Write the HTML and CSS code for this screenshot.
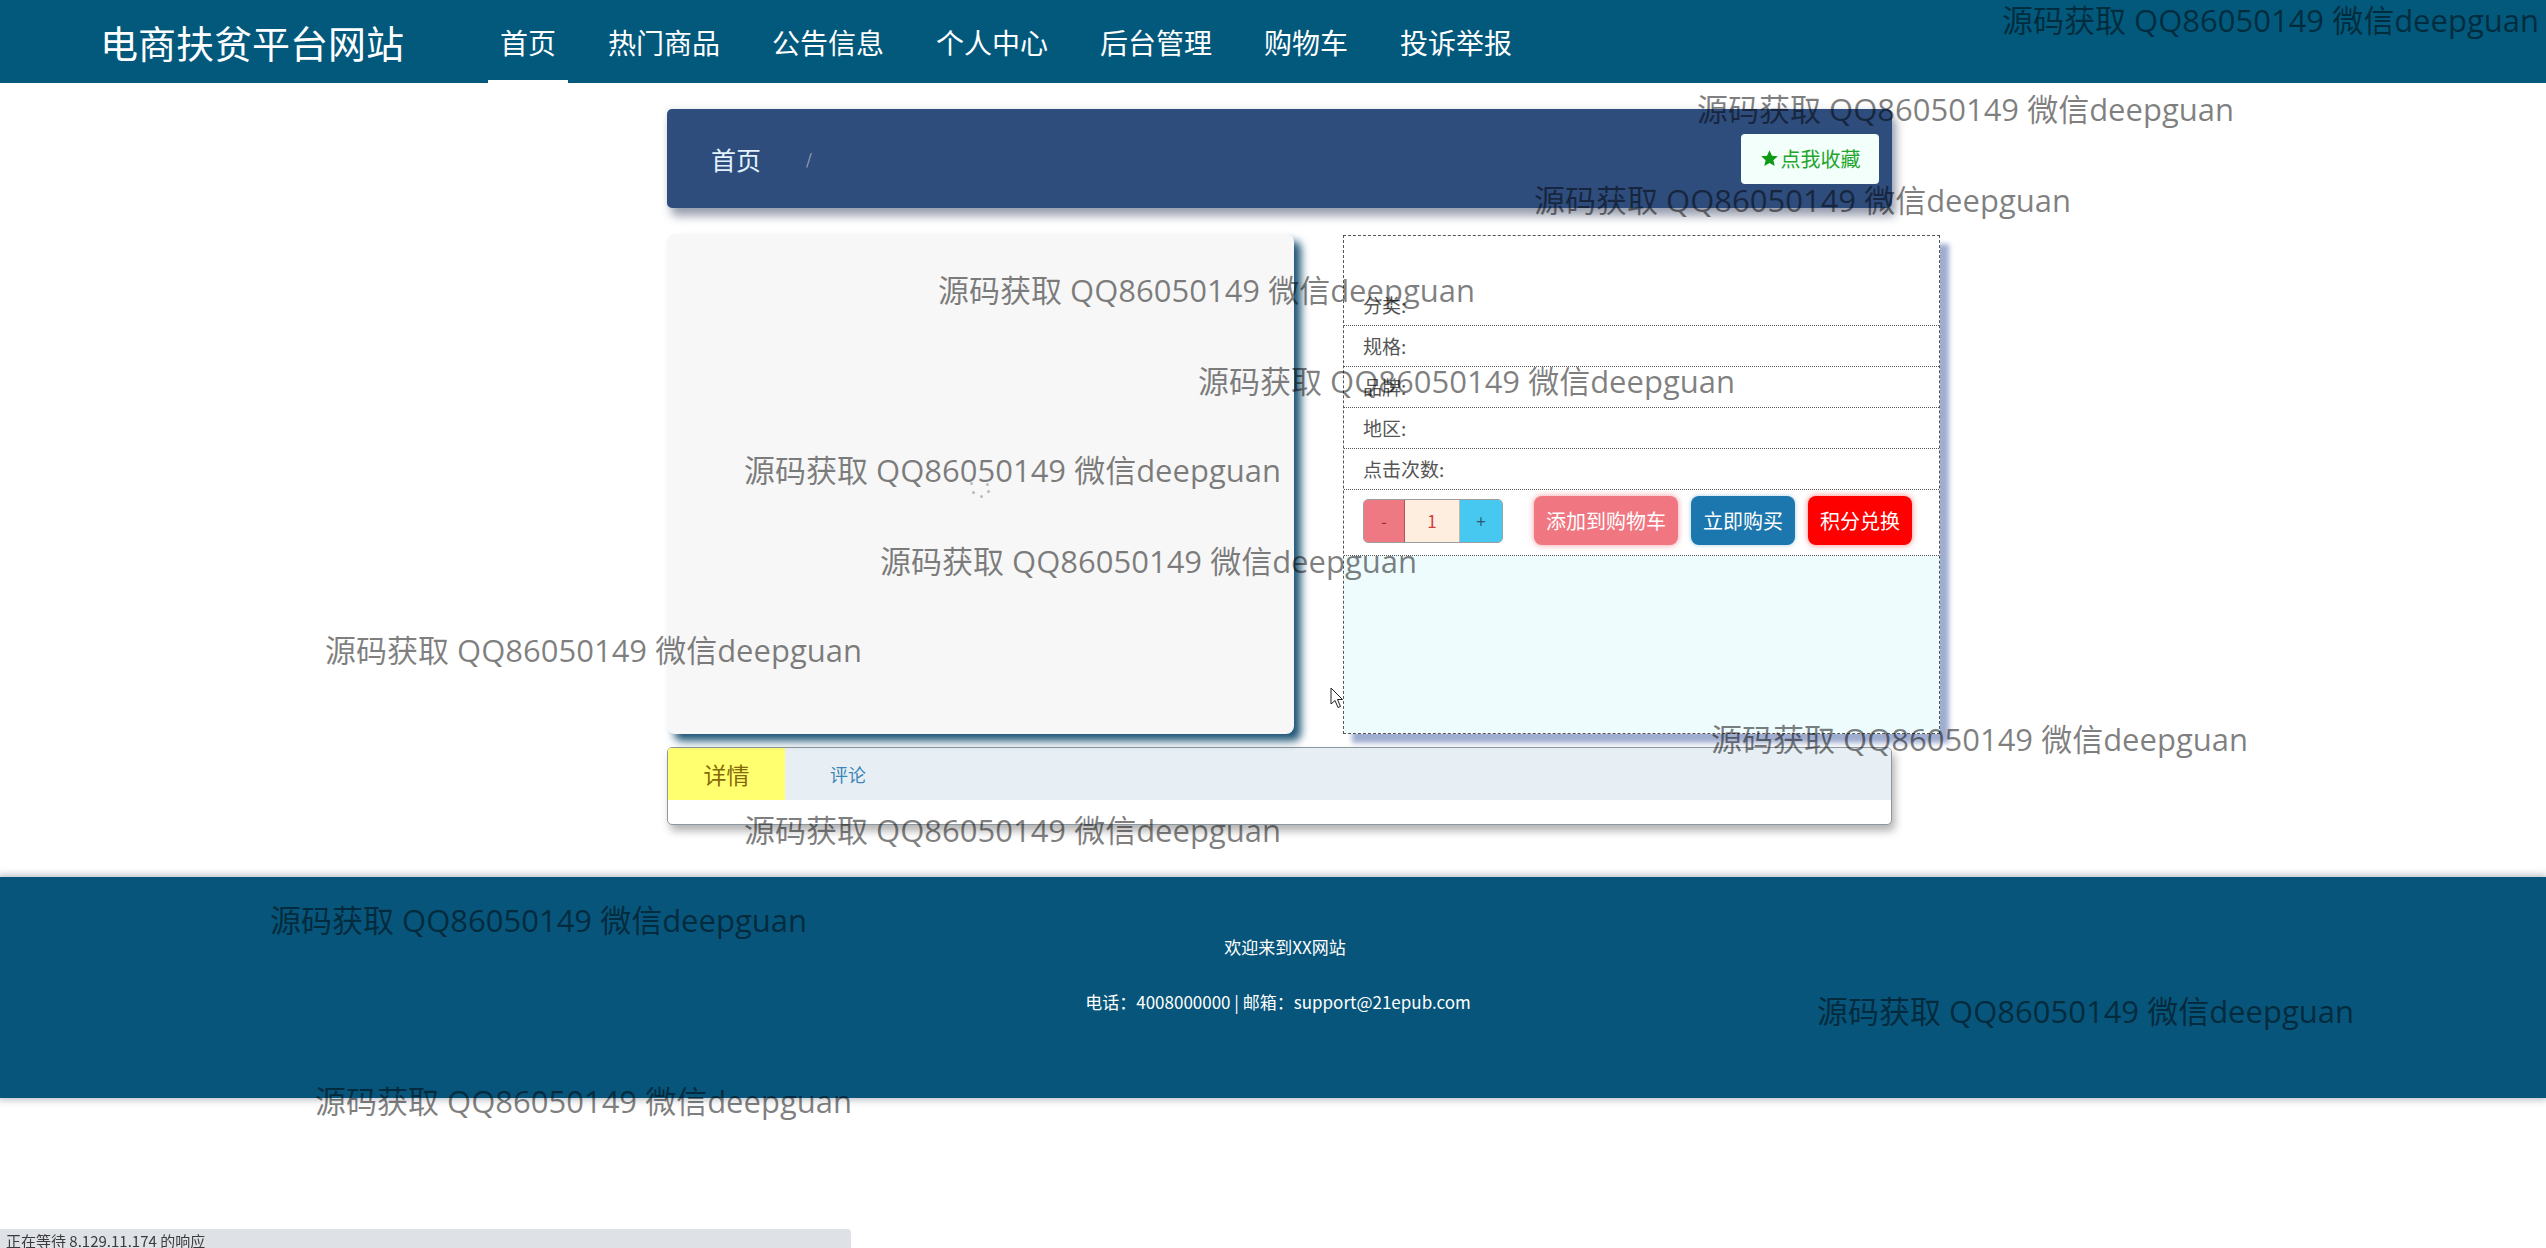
FILE: index.html
```html
<!DOCTYPE html>
<html lang="zh-CN">
<head>
<meta charset="utf-8">
<title>电商扶贫平台网站</title>
<link rel="stylesheet" href="styles.css">
</head>
<body>
<header class="topbar">
  <div class="logo">电商扶贫平台网站</div>
  <nav class="nav">
    <a class="nav-item active">首页</a>
    <a class="nav-item">热门商品</a>
    <a class="nav-item">公告信息</a>
    <a class="nav-item">个人中心</a>
    <a class="nav-item">后台管理</a>
    <a class="nav-item">购物车</a>
    <a class="nav-item">投诉举报</a>
  </nav>
</header>

<main class="main">
  <div class="crumb-bar">
    <div class="crumb">
      <span class="crumb-home">首页</span>
      <span class="crumb-sep">/</span>
    </div>
    <button class="fav-btn">
      <svg class="star" viewBox="0 0 24 24" width="19" height="19"><path d="M12 1.5l3.1 6.9 7.4.7-5.6 5 1.7 7.4L12 17.6l-6.6 3.9 1.7-7.4-5.6-5 7.4-.7z" fill="#0c9a17"/></svg>点我收藏
    </button>
  </div>

  <div class="product">
    <div class="gallery">
      <div class="spinner">
        <span class="dot d1"></span><span class="dot d2"></span><span class="dot d3"></span><span class="dot d4"></span><span class="dot d5"></span>
      </div>
    </div>
    <div class="info">
      <div class="info-title"></div>
      <div class="info-row">分类:</div>
      <div class="info-row">规格:</div>
      <div class="info-row">品牌:</div>
      <div class="info-row">地区:</div>
      <div class="info-row">点击次数:</div>
      <div class="info-actions">
        <div class="counter">
          <span class="cnt-minus">-</span>
          <span class="cnt-val">1</span>
          <span class="cnt-plus">+</span>
        </div>
        <div class="btns">
          <button class="btn btn-cart">添加到购物车</button>
          <button class="btn btn-buy">立即购买</button>
          <button class="btn btn-score">积分兑换</button>
        </div>
      </div>
      <div class="info-desc"></div>
    </div>
  </div>

  <div class="tabs">
    <div class="tab-head">
      <div class="tab tab-active">详情</div>
      <div class="tab tab-plain">评论</div>
    </div>
    <div class="tab-body"></div>
  </div>
</main>

<footer class="footer">
  <p class="footer-line1">欢迎来到XX网站</p>
  <p class="footer-line2">电话：4008000000 | 邮箱：support@21epub.com</p>
</footer>

<div class="watermarks">
  <span class="wm wm1">源码获取 QQ86050149 微信deepguan</span>
  <span class="wm wm2">源码获取 QQ86050149 微信deepguan</span>
  <span class="wm wm3">源码获取 QQ86050149 微信deepguan</span>
  <span class="wm wm4">源码获取 QQ86050149 微信deepguan</span>
  <span class="wm wm5">源码获取 QQ86050149 微信deepguan</span>
  <span class="wm wm6">源码获取 QQ86050149 微信deepguan</span>
  <span class="wm wm7">源码获取 QQ86050149 微信deepguan</span>
  <span class="wm wm8">源码获取 QQ86050149 微信deepguan</span>
  <span class="wm wm9">源码获取 QQ86050149 微信deepguan</span>
  <span class="wm wm10">源码获取 QQ86050149 微信deepguan</span>
  <span class="wm wm11">源码获取 QQ86050149 微信deepguan</span>
  <span class="wm wm12">源码获取 QQ86050149 微信deepguan</span>
  <span class="wm wm13">源码获取 QQ86050149 微信deepguan</span>
</div>

<svg class="cursor" viewBox="0 0 14 22" width="14" height="22"><path d="M1 1 L1 17 L5 13.5 L8 20.5 L10.5 19.5 L7.5 12.5 L12.5 12.5 Z" fill="#fff" stroke="#222" stroke-width="1"/></svg>

<div class="status">正在等待 8.129.11.174 的响应</div>
</body>
</html>
```

FILE: styles.css
```css
* { box-sizing: border-box; }

html, body {
  margin: 0;
  padding: 0;
}

body {
  background: #ffffff;
  font-family: "Noto Sans CJK SC", "Microsoft YaHei", sans-serif;
  color: #333;
  position: relative;
  min-height: 1248px;
  overflow: hidden;
}

/* ---------- header ---------- */
.topbar {
  height: 83px;
  background: #02597c;
  display: flex;
  align-items: stretch;
  padding-left: 100px;
}

.logo {
  color: #ffffff;
  font-size: 38px;
  display: flex;
  align-items: center;
  white-space: nowrap;
}

.nav {
  display: flex;
  align-items: stretch;
  gap: 28px;
  margin-left: 84px;
}

.nav-item {
  display: flex;
  align-items: center;
  padding: 0 12px;
  font-size: 28px;
  color: #ffffff;
  text-decoration: none;
  white-space: nowrap;
}

.nav-item.active {
  box-shadow: inset 0 -3px 0 #ffffff;
}

/* ---------- main ---------- */
.main {
  width: 1225px;
  margin: 26px 0 0 667px;
}

.crumb-bar {
  height: 99px;
  background: #2e4d7c;
  border-radius: 5px;
  display: flex;
  align-items: center;
  justify-content: space-between;
  padding: 0 13px 0 44px;
  box-shadow: 4px 8px 10px rgba(30, 45, 80, 0.45), 0 -2px 6px rgba(30, 45, 80, 0.08);
}

.crumb {
  display: flex;
  align-items: center;
}

.crumb-home {
  font-size: 25px;
  color: #e2f2ff;
}

.crumb-sep {
  margin-left: 45px;
  font-size: 15px;
  color: #a3acbb;
}

.fav-btn {
  height: 50px;
  width: 138px;
  border: none;
  border-radius: 4px;
  background: #f3fffa;
  color: #22a52c;
  font-family: inherit;
  font-size: 20px;
  display: flex;
  align-items: center;
  justify-content: center;
  gap: 2px;
  padding: 0;
}

.star {
  display: block;
}

/* ---------- product ---------- */
.product {
  display: flex;
  align-items: flex-start;
  gap: 49px;
  margin-top: 26px;
}

.gallery {
  flex: none;
  width: 627px;
  height: 500px;
  background: #f7f7f7;
  border-radius: 8px;
  box-shadow: 7px 7px 9px #1e5576;
  position: relative;
}

.spinner {
  position: absolute;
  left: 300px;
  top: 248px;
  width: 30px;
  height: 20px;
}

.dot {
  position: absolute;
  width: 3px;
  height: 3px;
  border-radius: 50%;
  background: #b9b9b9;
}
.d1 { left: 3px; top: 0; }
.d2 { left: 19px; top: 1px; }
.d3 { left: 5px; top: 9px; }
.d4 { left: 13px; top: 13px; }
.d5 { left: 20px; top: 8px; }

.info {
  flex: none;
  width: 597px;
  height: 499px;
  margin-top: 1px;
  border: 1px dashed #555;
  background: #ffffff;
  display: flex;
  flex-direction: column;
  box-shadow: 9px 9px 5px #9fadd0;
}

.info-title {
  height: 49px;
}

.info-row {
  height: 41px;
  line-height: 40px;
  border-bottom: 1px dotted #555;
  padding-left: 19px;
  font-size: 19px;
  color: #555;
}

.info-actions {
  height: 66px;
  border-bottom: 1px dotted #555;
  display: flex;
  align-items: center;
  padding-left: 19px;
}

.counter {
  display: flex;
  height: 44px;
  margin-top: -4px;
  border: 1px solid rgba(40, 40, 40, 0.45);
  border-radius: 5px;
  overflow: hidden;
}

.counter span {
  display: flex;
  align-items: center;
  justify-content: center;
  height: 100%;
  font-size: 17px;
}

.cnt-minus {
  width: 41px;
  background: #ef7983;
  color: #9c2a38;
  border-right: 1px solid rgba(120, 40, 50, 0.5);
}

.cnt-val {
  width: 55px;
  background: #fdeee0;
  color: #d23d3d;
  border-right: 1px solid rgba(60, 60, 60, 0.3);
  font-size: 18px;
}

.cnt-plus {
  width: 42px;
  background: #47c8f1;
  color: #2f5878;
}

.btns {
  display: flex;
  gap: 13px;
  margin-left: 31px;
  margin-top: -4px;
}

.btn {
  height: 49px;
  padding: 0 12px;
  border: none;
  border-radius: 8px;
  font-family: inherit;
  font-size: 20px;
  color: #ffffff;
}

.btn-cart {
  background: #f07781;
  box-shadow: 0 0 6px rgba(240, 110, 120, 0.7);
}

.btn-buy {
  background: #1b77ae;
  box-shadow: 0 0 4px rgba(27, 119, 174, 0.4);
}

.btn-score {
  background: #ff0000;
  box-shadow: 0 0 6px rgba(255, 40, 40, 0.6);
}

.info-desc {
  flex: 1;
  background: #effcfe;
}

/* ---------- tabs ---------- */
.tabs {
  margin-top: 13px;
  height: 78px;
  border: 1px solid #8c979f;
  border-radius: 5px;
  overflow: hidden;
  box-shadow: 3px 6px 8px rgba(0, 0, 0, 0.3);
  background: #ffffff;
}

.tab-head {
  height: 52px;
  background: #e7eff4;
  display: flex;
  align-items: stretch;
}

.tab {
  display: flex;
  align-items: center;
}

.tab-active {
  width: 117px;
  justify-content: center;
  background: #ffff6f;
  color: #86690a;
  font-size: 23px;
}

.tab-plain {
  margin-left: 45px;
  font-size: 18px;
  color: #3d85b6;
}

.tab-body {
  height: 24px;
}

/* ---------- footer ---------- */
.footer {
  margin-top: 52px;
  height: 221px;
  background: #07557a;
  box-shadow: 0 0 7px 2px rgba(60, 70, 90, 0.35);
  padding-top: 58px;
  text-align: center;
  color: #ffffff;
}

.footer p {
  margin: 0;
  font-size: 17px;
  line-height: 24px;
}

.footer-line1 {
  padding-left: 24px;
}

.footer-line2 {
  margin-top: 31px !important;
  padding-left: 10px;
}

/* ---------- watermarks ---------- */
.watermarks {
  position: absolute;
  left: 0;
  top: 0;
  width: 0;
  height: 0;
}

.wm {
  position: absolute;
  white-space: nowrap;
  font-family: "Open Sans", "Noto Sans CJK SC", sans-serif;
  font-size: 31px;
  line-height: 31px;
  color: rgba(0, 0, 0, 0.5);
}

.wm1 { left: 2002px; top: 5px; }
.wm2 { left: 1697px; top: 94px; }
.wm3 { left: 1534px; top: 185px; }
.wm4 { left: 938px; top: 275px; }
.wm5 { left: 1198px; top: 366px; }
.wm6 { left: 744px; top: 455px; }
.wm7 { left: 880px; top: 546px; }
.wm8 { left: 325px; top: 635px; }
.wm9 { left: 1711px; top: 724px; }
.wm10 { left: 744px; top: 815px; }
.wm11 { left: 270px; top: 905px; }
.wm12 { left: 1817px; top: 996px; }
.wm13 { left: 315px; top: 1086px; }

/* ---------- overlays ---------- */
.cursor {
  position: absolute;
  left: 1330px;
  top: 687px;
}

.status {
  position: fixed;
  left: 0;
  top: 1229px;
  width: 851px;
  height: 30px;
  background: #dee1e6;
  border-top-right-radius: 4px;
  padding: 1px 0 0 6px;
  font-family: "Noto Sans CJK SC", sans-serif;
  font-size: 15px;
  line-height: 22px;
  color: #3c3c3c;
}
```
